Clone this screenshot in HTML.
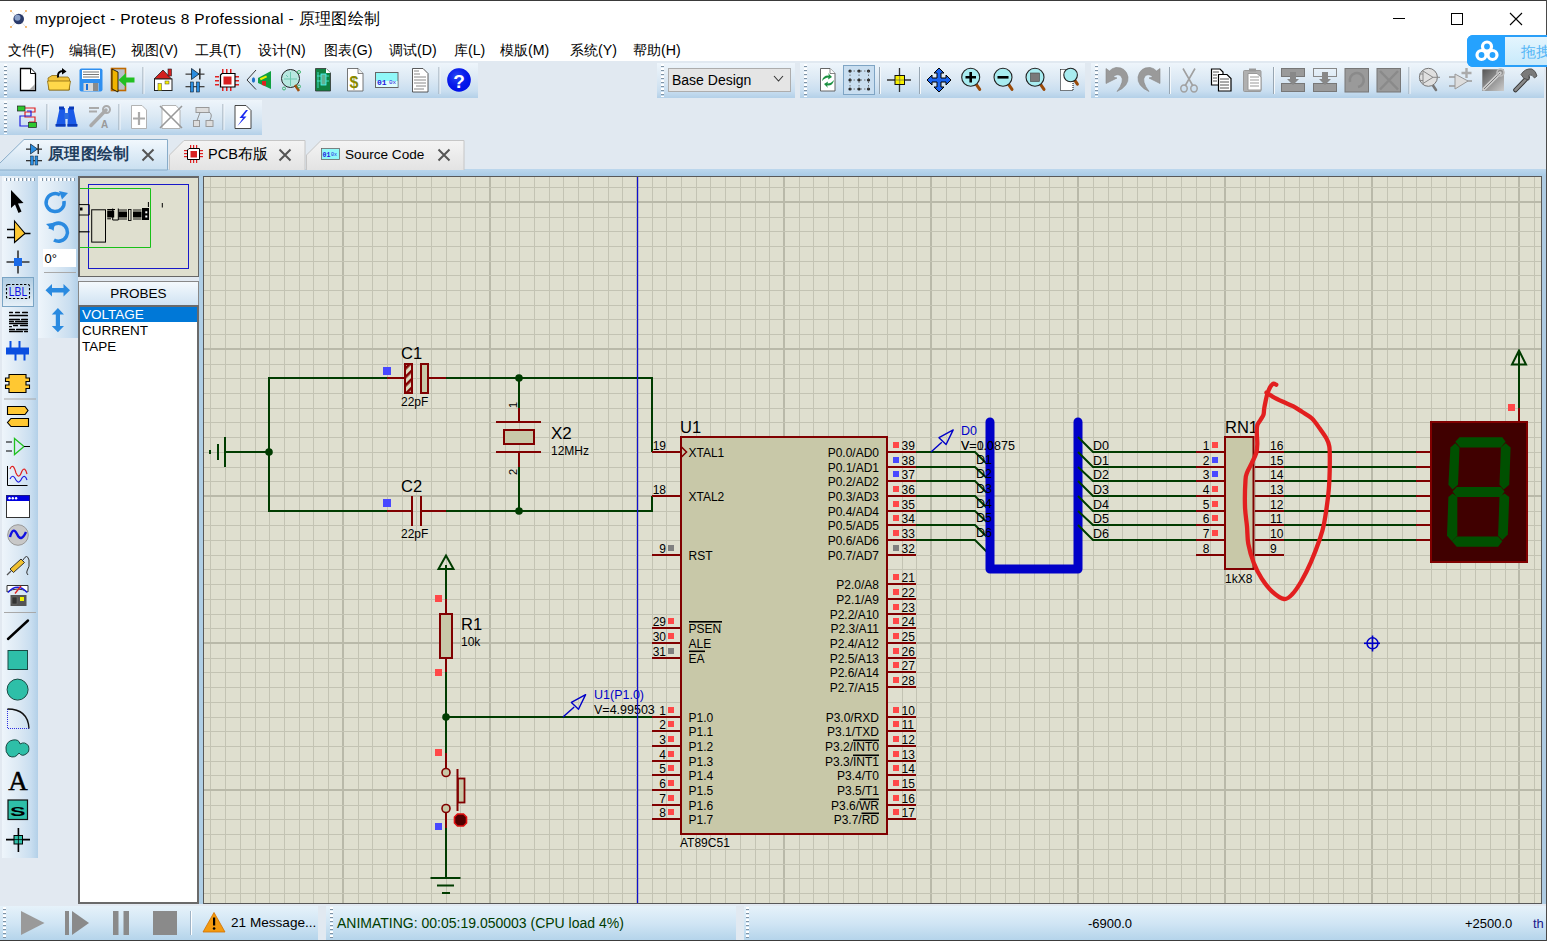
<!DOCTYPE html>
<html><head><meta charset="utf-8">
<style>
*{box-sizing:border-box}
body{margin:0;width:1547px;height:941px;position:relative;overflow:hidden;background:#fff;font-family:"Liberation Sans",sans-serif}
.a{position:absolute}
.t{white-space:nowrap;line-height:1}
</style></head><body>
<div class="a" style="left:0px;top:0px;width:1547px;height:38px;background:#fff"></div>
<div class="a" style="left:0px;top:0px;width:1547px;height:1px;background:#3a3a3a"></div>
<div class="a t" style="left:35px;top:11px;font-size:15.5px;letter-spacing:0.35px;color:#000">myproject - Proteus 8 Professional - 原理图绘制</div>
<div class="a" style="left:1393px;top:18px;width:12px;height:1px;background:#000"></div>
<div class="a" style="left:1451px;top:13px;width:12px;height:12px;border:1px solid #000"></div>
<svg class="a" style="left:1509px;top:12px" width="14" height="14"><path d="M1,1 L13,13 M13,1 L1,13" stroke="#000" stroke-width="1.1"/></svg>
<div class="a t" style="left:8px;top:43px;font-size:14.2px;color:#000">文件(F)</div>
<div class="a t" style="left:69px;top:43px;font-size:14.2px;color:#000">编辑(E)</div>
<div class="a t" style="left:131px;top:43px;font-size:14.2px;color:#000">视图(V)</div>
<div class="a t" style="left:195px;top:43px;font-size:14.2px;color:#000">工具(T)</div>
<div class="a t" style="left:258px;top:43px;font-size:14.2px;color:#000">设计(N)</div>
<div class="a t" style="left:324px;top:43px;font-size:14.2px;color:#000">图表(G)</div>
<div class="a t" style="left:389px;top:43px;font-size:14.2px;color:#000">调试(D)</div>
<div class="a t" style="left:454px;top:43px;font-size:14.2px;color:#000">库(L)</div>
<div class="a t" style="left:500px;top:43px;font-size:14.2px;color:#000">模版(M)</div>
<div class="a t" style="left:570px;top:43px;font-size:14.2px;color:#000">系统(Y)</div>
<div class="a t" style="left:633px;top:43px;font-size:14.2px;color:#000">帮助(H)</div>
<div class="a" style="left:0px;top:61px;width:1547px;height:74px;background:#e1e9f1"></div>
<div class="a" style="left:0px;top:63px;width:478px;height:35px;background:linear-gradient(#eef5fb 0%,#dce9f4 45%,#c9def0 80%,#b3d0e8 100%)"></div>
<div class="a" style="left:4px;top:64px;width:3px;height:33px;background:repeating-linear-gradient(#ffffff 0 2px,#7f93a6 2px 3px,transparent 3px 4px)"></div>
<div class="a" style="left:657px;top:63px;width:138px;height:35px;background:linear-gradient(#eef5fb 0%,#dce9f4 45%,#c9def0 80%,#b3d0e8 100%)"></div>
<div class="a" style="left:661px;top:64px;width:3px;height:33px;background:repeating-linear-gradient(#ffffff 0 2px,#7f93a6 2px 3px,transparent 3px 4px)"></div>
<div class="a" style="left:800px;top:63px;width:285px;height:35px;background:linear-gradient(#eef5fb 0%,#dce9f4 45%,#c9def0 80%,#b3d0e8 100%)"></div>
<div class="a" style="left:804px;top:64px;width:3px;height:33px;background:repeating-linear-gradient(#ffffff 0 2px,#7f93a6 2px 3px,transparent 3px 4px)"></div>
<div class="a" style="left:1091px;top:63px;width:453px;height:35px;background:linear-gradient(#eef5fb 0%,#dce9f4 45%,#c9def0 80%,#b3d0e8 100%)"></div>
<div class="a" style="left:1095px;top:64px;width:3px;height:33px;background:repeating-linear-gradient(#ffffff 0 2px,#7f93a6 2px 3px,transparent 3px 4px)"></div>
<div class="a" style="left:0px;top:100px;width:262px;height:35px;background:linear-gradient(#eef5fb 0%,#dce9f4 45%,#c9def0 80%,#b3d0e8 100%)"></div>
<div class="a" style="left:4px;top:101px;width:3px;height:33px;background:repeating-linear-gradient(#ffffff 0 2px,#7f93a6 2px 3px,transparent 3px 4px)"></div>
<div class="a" style="left:668px;top:68px;width:123px;height:24px;background:#e5e5e5;border:1px solid #adadad"></div>
<div class="a t" style="left:672px;top:73px;font-size:14px;color:#000">Base Design</div>
<svg class="a" style="left:773px;top:75px" width="11" height="8"><path d="M1,1 L5.5,6 L10,1" fill="none" stroke="#333" stroke-width="1.1"/></svg>
<div class="a" style="left:0px;top:135px;width:1547px;height:41px;background:#e1e9f1"></div>
<div class="a" style="left:0px;top:169px;width:1547px;height:7px;background:linear-gradient(#bcd7ed,#a9cbe6)"></div>
<svg class="a" style="left:0;top:139px" width="172" height="32"><defs><linearGradient id="tg1" x1="0" y1="0" x2="0" y2="1"><stop offset="0" stop-color="#f2f8fd"/><stop offset="1" stop-color="#c9dff0"/></linearGradient></defs><path d="M-1,25 L24,0.5 L167.5,0.5 L167.5,31 L-1,31 Z" fill="url(#tg1)" stroke="#88acc9" stroke-width="1"/></svg>
<svg class="a" style="left:168px;top:139px" width="300" height="32"><defs><linearGradient id="tg2" x1="0" y1="0" x2="0" y2="1"><stop offset="0" stop-color="#f4f4f4"/><stop offset="1" stop-color="#e3e3e3"/></linearGradient></defs><path d="M1.5,31 L1.5,16 L16,1.5 L137,1.5 L137,31" fill="url(#tg2)" stroke="#c6c6c6"/><path d="M138.5,31 L138.5,16 L153,1.5 L296,1.5 L296,31" fill="url(#tg2)" stroke="#c6c6c6"/></svg>
<div class="a t" style="left:48px;top:146px;font-size:15.5px;color:#1d3c5c;font-weight:bold;letter-spacing:0.3px">原理图绘制</div>
<div class="a t" style="left:208px;top:147px;font-size:14.5px;color:#000">PCB布版</div>
<div class="a t" style="left:345px;top:148px;font-size:13.6px;color:#000">Source Code</div>
<svg class="a" style="left:141px;top:148px" width="14" height="14"><path d="M1.5,1.5 L12.5,12.5 M12.5,1.5 L1.5,12.5" stroke="#555" stroke-width="2"/></svg>
<svg class="a" style="left:278px;top:148px" width="14" height="14"><path d="M1.5,1.5 L12.5,12.5 M12.5,1.5 L1.5,12.5" stroke="#555" stroke-width="2"/></svg>
<svg class="a" style="left:437px;top:148px" width="14" height="14"><path d="M1.5,1.5 L12.5,12.5 M12.5,1.5 L1.5,12.5" stroke="#555" stroke-width="2"/></svg>
<div class="a" style="left:0px;top:176px;width:203px;height:728px;background:#e2e9f1"></div>
<div class="a" style="left:2px;top:176px;width:36px;height:682px;background:linear-gradient(90deg,#eef5fb 0%,#dce9f4 45%,#c9def0 80%,#b3d0e8 100%)"></div>
<div class="a" style="left:4px;top:178px;width:32px;height:3px;background:repeating-linear-gradient(90deg,#ffffff 0 2px,#7f93a6 2px 3px,transparent 3px 4px)"></div>
<div class="a" style="left:38px;top:176px;width:40px;height:162px;background:linear-gradient(90deg,#eef5fb 0%,#dce9f4 45%,#c9def0 80%,#b3d0e8 100%)"></div>
<div class="a" style="left:40px;top:178px;width:36px;height:3px;background:repeating-linear-gradient(90deg,#ffffff 0 2px,#7f93a6 2px 3px,transparent 3px 4px)"></div>
<div class="a" style="left:78px;top:176px;width:121px;height:101px;background:#dfdfcf;border:2px solid #666;border-right-width:1px;border-bottom-width:1px"></div>
<div class="a" style="left:78px;top:281px;width:121px;height:25px;background:linear-gradient(#f4f9fd,#cfe2f2);border:1px solid #888;border-bottom:none"></div>
<div class="a t" style="left:78px;top:287px;width:121px;text-align:center;font-size:13.5px;color:#000">PROBES</div>
<div class="a" style="left:78px;top:305px;width:121px;height:599px;background:#fff;border:2px solid #6a6a6a"></div>
<div class="a" style="left:80px;top:307px;width:117px;height:15px;background:#0078d7"></div>
<div class="a t" style="left:82px;top:307px;font-size:13.5px;color:#fff;line-height:15px">VOLTAGE</div>
<div class="a t" style="left:82px;top:323px;font-size:13.5px;color:#000;line-height:15px">CURRENT</div>
<div class="a t" style="left:82px;top:339px;font-size:13.5px;color:#000;line-height:15px">TAPE</div>
<div class="a" style="left:199px;top:176px;width:4px;height:728px;background:#b0cfe6"></div>
<div class="a" style="left:1542px;top:176px;width:5px;height:728px;background:#aecbe2;border-right:1px solid #5a5a5a"></div>
<div class="a" style="left:0px;top:904px;width:1547px;height:2px;background:#e2e9f1"></div>
<div class="a" style="left:0px;top:906px;width:1547px;height:35px;background:linear-gradient(#e6f2fa,#d0e5f4 50%,#b3d3ea)"></div>
<div class="a" style="left:0px;top:940px;width:1547px;height:1px;background:#3c3c3c"></div>
<div class="a" style="left:3px;top:907px;width:3px;height:32px;background:repeating-linear-gradient(#ffffff 0 2px,#7f93a6 2px 3px,transparent 3px 4px)"></div>
<div class="a" style="left:190px;top:911px;width:1px;height:24px;background:#9fb3c6;box-shadow:1px 0 0 #fff"></div>
<div class="a" style="left:318px;top:906px;width:8px;height:34px;background:#e1e9f1"></div>
<div class="a" style="left:330px;top:907px;width:3px;height:32px;background:repeating-linear-gradient(#ffffff 0 2px,#7f93a6 2px 3px,transparent 3px 4px)"></div>
<div class="a t" style="left:231px;top:916px;font-size:13.6px;color:#000">21 Message...</div>
<div class="a t" style="left:337px;top:916px;font-size:14px;color:#003c00">ANIMATING: 00:05:19.050003 (CPU load 4%)</div>
<div class="a" style="left:736px;top:906px;width:8px;height:34px;background:#e1e9f1"></div>
<div class="a" style="left:746px;top:907px;width:3px;height:32px;background:repeating-linear-gradient(#ffffff 0 2px,#7f93a6 2px 3px,transparent 3px 4px)"></div>
<div class="a t" style="left:1088px;top:917px;font-size:13px;color:#000">-6900.0</div>
<div class="a t" style="left:1465px;top:917px;font-size:13px;color:#000">+2500.0</div>
<div class="a t" style="left:1533px;top:917px;font-size:13px;color:#1a1a8c">th</div>
<div class="a" style="left:1546px;top:0px;width:1px;height:941px;background:#4a4a4a"></div>
<div class="a" style="left:1467px;top:35px;width:90px;height:32px;border-radius:6px;background:linear-gradient(#e4f5fe,#c8eafb);border:2px solid #2a9ff8"></div>
<div class="a" style="left:1467px;top:35px;width:38px;height:32px;border-radius:6px 0 0 6px;background:#25a2fe"></div>
<div class="a t" style="left:1521px;top:44px;font-size:15px;color:#55b6f6">拖拽</div>
<svg class="a" style="left:1474px;top:39px" width="26" height="24"><g fill="none" stroke="#fff" stroke-width="3.2"><circle cx="13" cy="7.5" r="4.5"/><circle cx="7.5" cy="16" r="4.5"/><circle cx="18.5" cy="16" r="4.5"/></g></svg>
<div class="a" style="left:203px;top:176px;width:1339px;height:728px;background:#dfdfcf;border:1px solid #585858"></div>
<svg class="a" style="left:0;top:0" width="1547" height="941" viewBox="0 0 1547 941" font-family="Liberation Sans, sans-serif">
<rect x="210" y="177" width="1" height="726" fill="#c3c3b3"/>
<rect x="225" y="177" width="1" height="726" fill="#c3c3b3"/>
<rect x="240" y="177" width="1" height="726" fill="#c3c3b3"/>
<rect x="255" y="177" width="1" height="726" fill="#c3c3b3"/>
<rect x="269" y="177" width="1" height="726" fill="#c3c3b3"/>
<rect x="284" y="177" width="1" height="726" fill="#c3c3b3"/>
<rect x="299" y="177" width="1" height="726" fill="#c3c3b3"/>
<rect x="313" y="177" width="1" height="726" fill="#c3c3b3"/>
<rect x="328" y="177" width="1" height="726" fill="#c3c3b3"/>
<rect x="342" y="177" width="2" height="726" fill="#b9b9a9"/>
<rect x="358" y="177" width="1" height="726" fill="#c3c3b3"/>
<rect x="372" y="177" width="1" height="726" fill="#c3c3b3"/>
<rect x="387" y="177" width="1" height="726" fill="#c3c3b3"/>
<rect x="402" y="177" width="1" height="726" fill="#c3c3b3"/>
<rect x="416" y="177" width="1" height="726" fill="#c3c3b3"/>
<rect x="431" y="177" width="1" height="726" fill="#c3c3b3"/>
<rect x="446" y="177" width="1" height="726" fill="#c3c3b3"/>
<rect x="460" y="177" width="1" height="726" fill="#c3c3b3"/>
<rect x="475" y="177" width="1" height="726" fill="#c3c3b3"/>
<rect x="489" y="177" width="2" height="726" fill="#b9b9a9"/>
<rect x="505" y="177" width="1" height="726" fill="#c3c3b3"/>
<rect x="519" y="177" width="1" height="726" fill="#c3c3b3"/>
<rect x="534" y="177" width="1" height="726" fill="#c3c3b3"/>
<rect x="549" y="177" width="1" height="726" fill="#c3c3b3"/>
<rect x="563" y="177" width="1" height="726" fill="#c3c3b3"/>
<rect x="578" y="177" width="1" height="726" fill="#c3c3b3"/>
<rect x="593" y="177" width="1" height="726" fill="#c3c3b3"/>
<rect x="608" y="177" width="1" height="726" fill="#c3c3b3"/>
<rect x="622" y="177" width="1" height="726" fill="#c3c3b3"/>
<rect x="636" y="177" width="2" height="726" fill="#b9b9a9"/>
<rect x="652" y="177" width="1" height="726" fill="#c3c3b3"/>
<rect x="666" y="177" width="1" height="726" fill="#c3c3b3"/>
<rect x="681" y="177" width="1" height="726" fill="#c3c3b3"/>
<rect x="696" y="177" width="1" height="726" fill="#c3c3b3"/>
<rect x="710" y="177" width="1" height="726" fill="#c3c3b3"/>
<rect x="725" y="177" width="1" height="726" fill="#c3c3b3"/>
<rect x="740" y="177" width="1" height="726" fill="#c3c3b3"/>
<rect x="755" y="177" width="1" height="726" fill="#c3c3b3"/>
<rect x="769" y="177" width="1" height="726" fill="#c3c3b3"/>
<rect x="783" y="177" width="2" height="726" fill="#b9b9a9"/>
<rect x="799" y="177" width="1" height="726" fill="#c3c3b3"/>
<rect x="813" y="177" width="1" height="726" fill="#c3c3b3"/>
<rect x="828" y="177" width="1" height="726" fill="#c3c3b3"/>
<rect x="843" y="177" width="1" height="726" fill="#c3c3b3"/>
<rect x="858" y="177" width="1" height="726" fill="#c3c3b3"/>
<rect x="872" y="177" width="1" height="726" fill="#c3c3b3"/>
<rect x="887" y="177" width="1" height="726" fill="#c3c3b3"/>
<rect x="902" y="177" width="1" height="726" fill="#c3c3b3"/>
<rect x="916" y="177" width="1" height="726" fill="#c3c3b3"/>
<rect x="930" y="177" width="2" height="726" fill="#b9b9a9"/>
<rect x="946" y="177" width="1" height="726" fill="#c3c3b3"/>
<rect x="960" y="177" width="1" height="726" fill="#c3c3b3"/>
<rect x="975" y="177" width="1" height="726" fill="#c3c3b3"/>
<rect x="990" y="177" width="1" height="726" fill="#c3c3b3"/>
<rect x="1005" y="177" width="1" height="726" fill="#c3c3b3"/>
<rect x="1019" y="177" width="1" height="726" fill="#c3c3b3"/>
<rect x="1034" y="177" width="1" height="726" fill="#c3c3b3"/>
<rect x="1049" y="177" width="1" height="726" fill="#c3c3b3"/>
<rect x="1063" y="177" width="1" height="726" fill="#c3c3b3"/>
<rect x="1077" y="177" width="2" height="726" fill="#b9b9a9"/>
<rect x="1093" y="177" width="1" height="726" fill="#c3c3b3"/>
<rect x="1108" y="177" width="1" height="726" fill="#c3c3b3"/>
<rect x="1122" y="177" width="1" height="726" fill="#c3c3b3"/>
<rect x="1137" y="177" width="1" height="726" fill="#c3c3b3"/>
<rect x="1152" y="177" width="1" height="726" fill="#c3c3b3"/>
<rect x="1166" y="177" width="1" height="726" fill="#c3c3b3"/>
<rect x="1181" y="177" width="1" height="726" fill="#c3c3b3"/>
<rect x="1196" y="177" width="1" height="726" fill="#c3c3b3"/>
<rect x="1210" y="177" width="1" height="726" fill="#c3c3b3"/>
<rect x="1224" y="177" width="2" height="726" fill="#b9b9a9"/>
<rect x="1240" y="177" width="1" height="726" fill="#c3c3b3"/>
<rect x="1255" y="177" width="1" height="726" fill="#c3c3b3"/>
<rect x="1269" y="177" width="1" height="726" fill="#c3c3b3"/>
<rect x="1284" y="177" width="1" height="726" fill="#c3c3b3"/>
<rect x="1299" y="177" width="1" height="726" fill="#c3c3b3"/>
<rect x="1313" y="177" width="1" height="726" fill="#c3c3b3"/>
<rect x="1328" y="177" width="1" height="726" fill="#c3c3b3"/>
<rect x="1343" y="177" width="1" height="726" fill="#c3c3b3"/>
<rect x="1358" y="177" width="1" height="726" fill="#c3c3b3"/>
<rect x="1371" y="177" width="2" height="726" fill="#b9b9a9"/>
<rect x="1387" y="177" width="1" height="726" fill="#c3c3b3"/>
<rect x="1402" y="177" width="1" height="726" fill="#c3c3b3"/>
<rect x="1416" y="177" width="1" height="726" fill="#c3c3b3"/>
<rect x="1431" y="177" width="1" height="726" fill="#c3c3b3"/>
<rect x="1446" y="177" width="1" height="726" fill="#c3c3b3"/>
<rect x="1460" y="177" width="1" height="726" fill="#c3c3b3"/>
<rect x="1475" y="177" width="1" height="726" fill="#c3c3b3"/>
<rect x="1490" y="177" width="1" height="726" fill="#c3c3b3"/>
<rect x="1505" y="177" width="1" height="726" fill="#c3c3b3"/>
<rect x="1518" y="177" width="2" height="726" fill="#b9b9a9"/>
<rect x="1534" y="177" width="1" height="726" fill="#c3c3b3"/>
<rect x="204" y="187" width="1337" height="1" fill="#c3c3b3"/>
<rect x="204" y="201" width="1337" height="2" fill="#b9b9a9"/>
<rect x="204" y="217" width="1337" height="1" fill="#c3c3b3"/>
<rect x="204" y="231" width="1337" height="1" fill="#c3c3b3"/>
<rect x="204" y="246" width="1337" height="1" fill="#c3c3b3"/>
<rect x="204" y="261" width="1337" height="1" fill="#c3c3b3"/>
<rect x="204" y="275" width="1337" height="1" fill="#c3c3b3"/>
<rect x="204" y="290" width="1337" height="1" fill="#c3c3b3"/>
<rect x="204" y="305" width="1337" height="1" fill="#c3c3b3"/>
<rect x="204" y="319" width="1337" height="1" fill="#c3c3b3"/>
<rect x="204" y="334" width="1337" height="1" fill="#c3c3b3"/>
<rect x="204" y="348" width="1337" height="2" fill="#b9b9a9"/>
<rect x="204" y="364" width="1337" height="1" fill="#c3c3b3"/>
<rect x="204" y="378" width="1337" height="1" fill="#c3c3b3"/>
<rect x="204" y="393" width="1337" height="1" fill="#c3c3b3"/>
<rect x="204" y="408" width="1337" height="1" fill="#c3c3b3"/>
<rect x="204" y="422" width="1337" height="1" fill="#c3c3b3"/>
<rect x="204" y="437" width="1337" height="1" fill="#c3c3b3"/>
<rect x="204" y="452" width="1337" height="1" fill="#c3c3b3"/>
<rect x="204" y="467" width="1337" height="1" fill="#c3c3b3"/>
<rect x="204" y="481" width="1337" height="1" fill="#c3c3b3"/>
<rect x="204" y="495" width="1337" height="2" fill="#b9b9a9"/>
<rect x="204" y="511" width="1337" height="1" fill="#c3c3b3"/>
<rect x="204" y="525" width="1337" height="1" fill="#c3c3b3"/>
<rect x="204" y="540" width="1337" height="1" fill="#c3c3b3"/>
<rect x="204" y="555" width="1337" height="1" fill="#c3c3b3"/>
<rect x="204" y="569" width="1337" height="1" fill="#c3c3b3"/>
<rect x="204" y="584" width="1337" height="1" fill="#c3c3b3"/>
<rect x="204" y="599" width="1337" height="1" fill="#c3c3b3"/>
<rect x="204" y="614" width="1337" height="1" fill="#c3c3b3"/>
<rect x="204" y="628" width="1337" height="1" fill="#c3c3b3"/>
<rect x="204" y="642" width="1337" height="2" fill="#b9b9a9"/>
<rect x="204" y="658" width="1337" height="1" fill="#c3c3b3"/>
<rect x="204" y="672" width="1337" height="1" fill="#c3c3b3"/>
<rect x="204" y="687" width="1337" height="1" fill="#c3c3b3"/>
<rect x="204" y="702" width="1337" height="1" fill="#c3c3b3"/>
<rect x="204" y="717" width="1337" height="1" fill="#c3c3b3"/>
<rect x="204" y="731" width="1337" height="1" fill="#c3c3b3"/>
<rect x="204" y="746" width="1337" height="1" fill="#c3c3b3"/>
<rect x="204" y="761" width="1337" height="1" fill="#c3c3b3"/>
<rect x="204" y="775" width="1337" height="1" fill="#c3c3b3"/>
<rect x="204" y="789" width="1337" height="2" fill="#b9b9a9"/>
<rect x="204" y="805" width="1337" height="1" fill="#c3c3b3"/>
<rect x="204" y="819" width="1337" height="1" fill="#c3c3b3"/>
<rect x="204" y="834" width="1337" height="1" fill="#c3c3b3"/>
<rect x="204" y="849" width="1337" height="1" fill="#c3c3b3"/>
<rect x="204" y="864" width="1337" height="1" fill="#c3c3b3"/>
<rect x="204" y="878" width="1337" height="1" fill="#c3c3b3"/>
<rect x="204" y="893" width="1337" height="1" fill="#c3c3b3"/>
<rect x="224" y="437" width="2" height="30" fill="#003c00"/>
<rect x="217" y="444" width="2" height="16" fill="#003c00"/>
<rect x="209" y="450" width="2" height="4" fill="#003c00"/>
<line x1="225" y1="452" x2="269" y2="452" stroke="#003c00" stroke-width="2"/>
<polyline points="387,378 269,378 269,511 387,511" fill="none" stroke="#003c00" stroke-width="2" stroke-linejoin="miter"/>
<circle cx="269" cy="452" r="3.8" fill="#003c00"/>
<line x1="387" y1="378" x2="405" y2="378" stroke="#800000" stroke-width="2"/>
<line x1="428" y1="378" x2="446" y2="378" stroke="#800000" stroke-width="2"/>
<defs><pattern id="hatch" width="6" height="6" patternUnits="userSpaceOnUse" patternTransform="rotate(45)"><rect width="6" height="6" fill="#dcdcc0"/><rect width="2.6" height="6" fill="#800000"/></pattern></defs>
<rect x="405" y="364" width="7" height="29" fill="url(#hatch)" stroke="#800000" stroke-width="2"/>
<rect x="421" y="364" width="7" height="29" fill="#c8c8a8" stroke="#800000" stroke-width="2"/>
<rect x="383" y="367" width="8" height="8" fill="#4848ff"/>
<text x="401" y="359" font-size="16.5" fill="#000" text-anchor="start" >C1</text>
<text x="401" y="406" font-size="12" fill="#000" text-anchor="start" >22pF</text>
<line x1="387" y1="511" x2="412" y2="511" stroke="#800000" stroke-width="2"/>
<line x1="421" y1="511" x2="446" y2="511" stroke="#800000" stroke-width="2"/>
<rect x="411" y="496" width="2" height="30" fill="#800000"/>
<rect x="420" y="496" width="2" height="30" fill="#800000"/>
<rect x="383" y="499" width="8" height="8" fill="#4848ff"/>
<text x="401" y="492" font-size="16.5" fill="#000" text-anchor="start" >C2</text>
<text x="401" y="538" font-size="12" fill="#000" text-anchor="start" >22pF</text>
<polyline points="446,378 652,378 652,452" fill="none" stroke="#003c00" stroke-width="2" stroke-linejoin="miter"/>
<polyline points="446,511 652,511 652,496" fill="none" stroke="#003c00" stroke-width="2" stroke-linejoin="miter"/>
<circle cx="519" cy="378" r="3.8" fill="#003c00"/>
<circle cx="519" cy="511" r="3.8" fill="#003c00"/>
<line x1="519" y1="378" x2="519" y2="408" stroke="#003c00" stroke-width="2"/>
<line x1="519" y1="408" x2="519" y2="422" stroke="#800000" stroke-width="2"/>
<line x1="496" y1="422" x2="541" y2="422" stroke="#800000" stroke-width="2"/>
<rect x="504" y="430" width="30" height="14" fill="#c8c8a8" stroke="#800000" stroke-width="2"/>
<line x1="496" y1="452" x2="541" y2="452" stroke="#800000" stroke-width="2"/>
<line x1="519" y1="452" x2="519" y2="467" stroke="#800000" stroke-width="2"/>
<line x1="519" y1="467" x2="519" y2="511" stroke="#003c00" stroke-width="2"/>
<text x="551" y="439" font-size="17" fill="#000" text-anchor="start" >X2</text>
<text x="551" y="455" font-size="12" fill="#000" text-anchor="start" >12MHz</text>
<text x="517" y="408" font-size="11" transform="rotate(-90 517 408)" text-anchor="start">1</text>
<text x="517" y="475" font-size="11" transform="rotate(-90 517 475)" text-anchor="start">2</text>
<rect x="681" y="437" width="206" height="397" fill="#c8c8a8" stroke="#800000" stroke-width="2"/>
<text x="680" y="433" font-size="16.5" fill="#000" text-anchor="start" >U1</text>
<text x="680" y="847" font-size="12" fill="#000" text-anchor="start" >AT89C51</text>
<line x1="652" y1="452" x2="681" y2="452" stroke="#800000" stroke-width="2"/>
<text x="666" y="450" font-size="12" fill="#000" text-anchor="end" >19</text>
<text x="688.5" y="456.8" font-size="12" fill="#000" text-anchor="start" >XTAL1</text>
<line x1="652" y1="496" x2="681" y2="496" stroke="#800000" stroke-width="2"/>
<text x="666" y="494" font-size="12" fill="#000" text-anchor="end" >18</text>
<text x="688.5" y="500.8" font-size="12" fill="#000" text-anchor="start" >XTAL2</text>
<line x1="652" y1="555" x2="681" y2="555" stroke="#800000" stroke-width="2"/>
<text x="666" y="553" font-size="12" fill="#000" text-anchor="end" >9</text>
<rect x="668" y="545" width="6" height="6" fill="#808080"/>
<text x="688.5" y="559.8" font-size="12" fill="#000" text-anchor="start" >RST</text>
<line x1="652" y1="628" x2="681" y2="628" stroke="#800000" stroke-width="2"/>
<text x="666" y="626" font-size="12" fill="#000" text-anchor="end" >29</text>
<rect x="668" y="618" width="6" height="6" fill="#ff4848"/>
<text x="688.5" y="632.8" font-size="12" fill="#000" text-anchor="start" >PSEN</text>
<line x1="652" y1="643" x2="681" y2="643" stroke="#800000" stroke-width="2"/>
<text x="666" y="641" font-size="12" fill="#000" text-anchor="end" >30</text>
<rect x="668" y="633" width="6" height="6" fill="#ff4848"/>
<text x="688.5" y="647.8" font-size="12" fill="#000" text-anchor="start" >ALE</text>
<line x1="652" y1="658" x2="681" y2="658" stroke="#800000" stroke-width="2"/>
<text x="666" y="656" font-size="12" fill="#000" text-anchor="end" >31</text>
<rect x="668" y="648" width="6" height="6" fill="#808080"/>
<text x="688.5" y="662.8" font-size="12" fill="#000" text-anchor="start" >EA</text>
<line x1="652" y1="717" x2="681" y2="717" stroke="#800000" stroke-width="2"/>
<text x="666" y="715" font-size="12" fill="#000" text-anchor="end" >1</text>
<rect x="668" y="707" width="6" height="6" fill="#ff4848"/>
<text x="688.5" y="721.8" font-size="12" fill="#000" text-anchor="start" >P1.0</text>
<line x1="652" y1="731" x2="681" y2="731" stroke="#800000" stroke-width="2"/>
<text x="666" y="729" font-size="12" fill="#000" text-anchor="end" >2</text>
<rect x="668" y="721" width="6" height="6" fill="#ff4848"/>
<text x="688.5" y="735.8" font-size="12" fill="#000" text-anchor="start" >P1.1</text>
<line x1="652" y1="746" x2="681" y2="746" stroke="#800000" stroke-width="2"/>
<text x="666" y="744" font-size="12" fill="#000" text-anchor="end" >3</text>
<rect x="668" y="736" width="6" height="6" fill="#ff4848"/>
<text x="688.5" y="750.8" font-size="12" fill="#000" text-anchor="start" >P1.2</text>
<line x1="652" y1="761" x2="681" y2="761" stroke="#800000" stroke-width="2"/>
<text x="666" y="759" font-size="12" fill="#000" text-anchor="end" >4</text>
<rect x="668" y="751" width="6" height="6" fill="#ff4848"/>
<text x="688.5" y="765.8" font-size="12" fill="#000" text-anchor="start" >P1.3</text>
<line x1="652" y1="775" x2="681" y2="775" stroke="#800000" stroke-width="2"/>
<text x="666" y="773" font-size="12" fill="#000" text-anchor="end" >5</text>
<rect x="668" y="765" width="6" height="6" fill="#ff4848"/>
<text x="688.5" y="779.8" font-size="12" fill="#000" text-anchor="start" >P1.4</text>
<line x1="652" y1="790" x2="681" y2="790" stroke="#800000" stroke-width="2"/>
<text x="666" y="788" font-size="12" fill="#000" text-anchor="end" >6</text>
<rect x="668" y="780" width="6" height="6" fill="#ff4848"/>
<text x="688.5" y="794.8" font-size="12" fill="#000" text-anchor="start" >P1.5</text>
<line x1="652" y1="805" x2="681" y2="805" stroke="#800000" stroke-width="2"/>
<text x="666" y="803" font-size="12" fill="#000" text-anchor="end" >7</text>
<rect x="668" y="795" width="6" height="6" fill="#ff4848"/>
<text x="688.5" y="809.8" font-size="12" fill="#000" text-anchor="start" >P1.6</text>
<line x1="652" y1="819" x2="681" y2="819" stroke="#800000" stroke-width="2"/>
<text x="666" y="817" font-size="12" fill="#000" text-anchor="end" >8</text>
<rect x="668" y="809" width="6" height="6" fill="#ff4848"/>
<text x="688.5" y="823.8" font-size="12" fill="#000" text-anchor="start" >P1.7</text>
<rect x="689" y="621" width="33" height="1.6" fill="#000"/>
<rect x="689" y="650.5" width="16" height="1.6" fill="#000"/>
<polyline points="681,446.5 686.5,452 681,457.5" fill="none" stroke="#800000" stroke-width="1.6"/>
<line x1="887" y1="452" x2="916" y2="452" stroke="#800000" stroke-width="2"/>
<text x="901.5" y="449.5" font-size="12" fill="#000" text-anchor="start" >39</text>
<rect x="893" y="442" width="6" height="6" fill="#ff4848"/>
<text x="879" y="456.8" font-size="12" fill="#000" text-anchor="end" >P0.0/AD0</text>
<line x1="887" y1="467" x2="916" y2="467" stroke="#800000" stroke-width="2"/>
<text x="901.5" y="464.5" font-size="12" fill="#000" text-anchor="start" >38</text>
<rect x="893" y="457" width="6" height="6" fill="#4848ff"/>
<text x="879" y="471.8" font-size="12" fill="#000" text-anchor="end" >P0.1/AD1</text>
<line x1="887" y1="481" x2="916" y2="481" stroke="#800000" stroke-width="2"/>
<text x="901.5" y="478.5" font-size="12" fill="#000" text-anchor="start" >37</text>
<rect x="893" y="471" width="6" height="6" fill="#4848ff"/>
<text x="879" y="485.8" font-size="12" fill="#000" text-anchor="end" >P0.2/AD2</text>
<line x1="887" y1="496" x2="916" y2="496" stroke="#800000" stroke-width="2"/>
<text x="901.5" y="493.5" font-size="12" fill="#000" text-anchor="start" >36</text>
<rect x="893" y="486" width="6" height="6" fill="#ff4848"/>
<text x="879" y="500.8" font-size="12" fill="#000" text-anchor="end" >P0.3/AD3</text>
<line x1="887" y1="511" x2="916" y2="511" stroke="#800000" stroke-width="2"/>
<text x="901.5" y="508.5" font-size="12" fill="#000" text-anchor="start" >35</text>
<rect x="893" y="501" width="6" height="6" fill="#ff4848"/>
<text x="879" y="515.8" font-size="12" fill="#000" text-anchor="end" >P0.4/AD4</text>
<line x1="887" y1="525" x2="916" y2="525" stroke="#800000" stroke-width="2"/>
<text x="901.5" y="522.5" font-size="12" fill="#000" text-anchor="start" >34</text>
<rect x="893" y="515" width="6" height="6" fill="#ff4848"/>
<text x="879" y="529.8" font-size="12" fill="#000" text-anchor="end" >P0.5/AD5</text>
<line x1="887" y1="540" x2="916" y2="540" stroke="#800000" stroke-width="2"/>
<text x="901.5" y="537.5" font-size="12" fill="#000" text-anchor="start" >33</text>
<rect x="893" y="530" width="6" height="6" fill="#ff4848"/>
<text x="879" y="544.8" font-size="12" fill="#000" text-anchor="end" >P0.6/AD6</text>
<line x1="887" y1="555" x2="916" y2="555" stroke="#800000" stroke-width="2"/>
<text x="901.5" y="552.5" font-size="12" fill="#000" text-anchor="start" >32</text>
<rect x="893" y="545" width="6" height="6" fill="#808080"/>
<text x="879" y="559.8" font-size="12" fill="#000" text-anchor="end" >P0.7/AD7</text>
<line x1="887" y1="584" x2="916" y2="584" stroke="#800000" stroke-width="2"/>
<text x="901.5" y="581.5" font-size="12" fill="#000" text-anchor="start" >21</text>
<rect x="893" y="574" width="6" height="6" fill="#ff4848"/>
<text x="879" y="588.8" font-size="12" fill="#000" text-anchor="end" >P2.0/A8</text>
<line x1="887" y1="599" x2="916" y2="599" stroke="#800000" stroke-width="2"/>
<text x="901.5" y="596.5" font-size="12" fill="#000" text-anchor="start" >22</text>
<rect x="893" y="589" width="6" height="6" fill="#ff4848"/>
<text x="879" y="603.8" font-size="12" fill="#000" text-anchor="end" >P2.1/A9</text>
<line x1="887" y1="614" x2="916" y2="614" stroke="#800000" stroke-width="2"/>
<text x="901.5" y="611.5" font-size="12" fill="#000" text-anchor="start" >23</text>
<rect x="893" y="604" width="6" height="6" fill="#ff4848"/>
<text x="879" y="618.8" font-size="12" fill="#000" text-anchor="end" >P2.2/A10</text>
<line x1="887" y1="628" x2="916" y2="628" stroke="#800000" stroke-width="2"/>
<text x="901.5" y="625.5" font-size="12" fill="#000" text-anchor="start" >24</text>
<rect x="893" y="618" width="6" height="6" fill="#ff4848"/>
<text x="879" y="632.8" font-size="12" fill="#000" text-anchor="end" >P2.3/A11</text>
<line x1="887" y1="643" x2="916" y2="643" stroke="#800000" stroke-width="2"/>
<text x="901.5" y="640.5" font-size="12" fill="#000" text-anchor="start" >25</text>
<rect x="893" y="633" width="6" height="6" fill="#ff4848"/>
<text x="879" y="647.8" font-size="12" fill="#000" text-anchor="end" >P2.4/A12</text>
<line x1="887" y1="658" x2="916" y2="658" stroke="#800000" stroke-width="2"/>
<text x="901.5" y="655.5" font-size="12" fill="#000" text-anchor="start" >26</text>
<rect x="893" y="648" width="6" height="6" fill="#ff4848"/>
<text x="879" y="662.8" font-size="12" fill="#000" text-anchor="end" >P2.5/A13</text>
<line x1="887" y1="672" x2="916" y2="672" stroke="#800000" stroke-width="2"/>
<text x="901.5" y="669.5" font-size="12" fill="#000" text-anchor="start" >27</text>
<rect x="893" y="662" width="6" height="6" fill="#ff4848"/>
<text x="879" y="676.8" font-size="12" fill="#000" text-anchor="end" >P2.6/A14</text>
<line x1="887" y1="687" x2="916" y2="687" stroke="#800000" stroke-width="2"/>
<text x="901.5" y="684.5" font-size="12" fill="#000" text-anchor="start" >28</text>
<rect x="893" y="677" width="6" height="6" fill="#ff4848"/>
<text x="879" y="691.8" font-size="12" fill="#000" text-anchor="end" >P2.7/A15</text>
<line x1="887" y1="717" x2="916" y2="717" stroke="#800000" stroke-width="2"/>
<text x="901.5" y="714.5" font-size="12" fill="#000" text-anchor="start" >10</text>
<rect x="893" y="707" width="6" height="6" fill="#ff4848"/>
<text x="879" y="721.8" font-size="12" fill="#000" text-anchor="end" >P3.0/RXD</text>
<line x1="887" y1="731" x2="916" y2="731" stroke="#800000" stroke-width="2"/>
<text x="901.5" y="728.5" font-size="12" fill="#000" text-anchor="start" >11</text>
<rect x="893" y="721" width="6" height="6" fill="#ff4848"/>
<text x="879" y="735.8" font-size="12" fill="#000" text-anchor="end" >P3.1/TXD</text>
<line x1="887" y1="746" x2="916" y2="746" stroke="#800000" stroke-width="2"/>
<text x="901.5" y="743.5" font-size="12" fill="#000" text-anchor="start" >12</text>
<rect x="893" y="736" width="6" height="6" fill="#ff4848"/>
<text x="879" y="750.8" font-size="12" fill="#000" text-anchor="end" >P3.2/INT0</text>
<line x1="887" y1="761" x2="916" y2="761" stroke="#800000" stroke-width="2"/>
<text x="901.5" y="758.5" font-size="12" fill="#000" text-anchor="start" >13</text>
<rect x="893" y="751" width="6" height="6" fill="#ff4848"/>
<text x="879" y="765.8" font-size="12" fill="#000" text-anchor="end" >P3.3/INT1</text>
<line x1="887" y1="775" x2="916" y2="775" stroke="#800000" stroke-width="2"/>
<text x="901.5" y="772.5" font-size="12" fill="#000" text-anchor="start" >14</text>
<rect x="893" y="765" width="6" height="6" fill="#ff4848"/>
<text x="879" y="779.8" font-size="12" fill="#000" text-anchor="end" >P3.4/T0</text>
<line x1="887" y1="790" x2="916" y2="790" stroke="#800000" stroke-width="2"/>
<text x="901.5" y="787.5" font-size="12" fill="#000" text-anchor="start" >15</text>
<rect x="893" y="780" width="6" height="6" fill="#ff4848"/>
<text x="879" y="794.8" font-size="12" fill="#000" text-anchor="end" >P3.5/T1</text>
<line x1="887" y1="805" x2="916" y2="805" stroke="#800000" stroke-width="2"/>
<text x="901.5" y="802.5" font-size="12" fill="#000" text-anchor="start" >16</text>
<rect x="893" y="795" width="6" height="6" fill="#ff4848"/>
<text x="879" y="809.8" font-size="12" fill="#000" text-anchor="end" >P3.6/WR</text>
<line x1="887" y1="819" x2="916" y2="819" stroke="#800000" stroke-width="2"/>
<text x="901.5" y="816.5" font-size="12" fill="#000" text-anchor="start" >17</text>
<rect x="893" y="809" width="6" height="6" fill="#ff4848"/>
<text x="879" y="823.8" font-size="12" fill="#000" text-anchor="end" >P3.7/RD</text>
<rect x="853" y="739.5" width="26" height="1.6" fill="#000"/>
<rect x="853" y="754.5" width="26" height="1.6" fill="#000"/>
<rect x="859.5" y="798.5" width="19.5" height="1.6" fill="#000"/>
<rect x="861.5" y="812.5" width="17.5" height="1.6" fill="#000"/>
<polyline points="916,452 975,452 990,467" fill="none" stroke="#003c00" stroke-width="2" stroke-linejoin="miter"/>
<polyline points="916,467 975,467 990,481" fill="none" stroke="#003c00" stroke-width="2" stroke-linejoin="miter"/>
<polyline points="916,481 975,481 990,496" fill="none" stroke="#003c00" stroke-width="2" stroke-linejoin="miter"/>
<polyline points="916,496 975,496 990,511" fill="none" stroke="#003c00" stroke-width="2" stroke-linejoin="miter"/>
<polyline points="916,511 975,511 990,525" fill="none" stroke="#003c00" stroke-width="2" stroke-linejoin="miter"/>
<polyline points="916,525 975,525 990,540" fill="none" stroke="#003c00" stroke-width="2" stroke-linejoin="miter"/>
<polyline points="916,540 975,540 990,555" fill="none" stroke="#003c00" stroke-width="2" stroke-linejoin="miter"/>
<polyline points="990,422 990,569 1078,569 1078,422" fill="none" stroke="#0000c8" stroke-width="9" stroke-linecap="round" stroke-linejoin="round"/>
<text x="976" y="464" font-size="12.5" fill="#000" text-anchor="start" >D1</text>
<text x="976" y="478" font-size="12.5" fill="#000" text-anchor="start" >D2</text>
<text x="976" y="493" font-size="12.5" fill="#000" text-anchor="start" >D3</text>
<text x="976" y="508" font-size="12.5" fill="#000" text-anchor="start" >D4</text>
<text x="976" y="522" font-size="12.5" fill="#000" text-anchor="start" >D5</text>
<text x="976" y="537" font-size="12.5" fill="#000" text-anchor="start" >D6</text>
<polyline points="1078,437 1093,452 1196,452" fill="none" stroke="#003c00" stroke-width="2" stroke-linejoin="miter"/>
<line x1="1196" y1="452" x2="1225" y2="452" stroke="#800000" stroke-width="2"/>
<text x="1093" y="450" font-size="12.5" fill="#000" text-anchor="start" >D0</text>
<polyline points="1284,452 1416,452" fill="none" stroke="#003c00" stroke-width="2" stroke-linejoin="miter"/>
<line x1="1416" y1="452" x2="1431" y2="452" stroke="#800000" stroke-width="2"/>
<polyline points="1078,452 1093,467 1196,467" fill="none" stroke="#003c00" stroke-width="2" stroke-linejoin="miter"/>
<line x1="1196" y1="467" x2="1225" y2="467" stroke="#800000" stroke-width="2"/>
<text x="1093" y="465" font-size="12.5" fill="#000" text-anchor="start" >D1</text>
<polyline points="1284,467 1416,467" fill="none" stroke="#003c00" stroke-width="2" stroke-linejoin="miter"/>
<line x1="1416" y1="467" x2="1431" y2="467" stroke="#800000" stroke-width="2"/>
<polyline points="1078,467 1093,481 1196,481" fill="none" stroke="#003c00" stroke-width="2" stroke-linejoin="miter"/>
<line x1="1196" y1="481" x2="1225" y2="481" stroke="#800000" stroke-width="2"/>
<text x="1093" y="479" font-size="12.5" fill="#000" text-anchor="start" >D2</text>
<polyline points="1284,481 1416,481" fill="none" stroke="#003c00" stroke-width="2" stroke-linejoin="miter"/>
<line x1="1416" y1="481" x2="1431" y2="481" stroke="#800000" stroke-width="2"/>
<polyline points="1078,481 1093,496 1196,496" fill="none" stroke="#003c00" stroke-width="2" stroke-linejoin="miter"/>
<line x1="1196" y1="496" x2="1225" y2="496" stroke="#800000" stroke-width="2"/>
<text x="1093" y="494" font-size="12.5" fill="#000" text-anchor="start" >D3</text>
<polyline points="1284,496 1416,496" fill="none" stroke="#003c00" stroke-width="2" stroke-linejoin="miter"/>
<line x1="1416" y1="496" x2="1431" y2="496" stroke="#800000" stroke-width="2"/>
<polyline points="1078,496 1093,511 1196,511" fill="none" stroke="#003c00" stroke-width="2" stroke-linejoin="miter"/>
<line x1="1196" y1="511" x2="1225" y2="511" stroke="#800000" stroke-width="2"/>
<text x="1093" y="509" font-size="12.5" fill="#000" text-anchor="start" >D4</text>
<polyline points="1284,511 1416,511" fill="none" stroke="#003c00" stroke-width="2" stroke-linejoin="miter"/>
<line x1="1416" y1="511" x2="1431" y2="511" stroke="#800000" stroke-width="2"/>
<polyline points="1078,511 1093,525 1196,525" fill="none" stroke="#003c00" stroke-width="2" stroke-linejoin="miter"/>
<line x1="1196" y1="525" x2="1225" y2="525" stroke="#800000" stroke-width="2"/>
<text x="1093" y="523" font-size="12.5" fill="#000" text-anchor="start" >D5</text>
<polyline points="1284,525 1416,525" fill="none" stroke="#003c00" stroke-width="2" stroke-linejoin="miter"/>
<line x1="1416" y1="525" x2="1431" y2="525" stroke="#800000" stroke-width="2"/>
<polyline points="1078,525 1093,540 1196,540" fill="none" stroke="#003c00" stroke-width="2" stroke-linejoin="miter"/>
<line x1="1196" y1="540" x2="1225" y2="540" stroke="#800000" stroke-width="2"/>
<text x="1093" y="538" font-size="12.5" fill="#000" text-anchor="start" >D6</text>
<polyline points="1284,540 1416,540" fill="none" stroke="#003c00" stroke-width="2" stroke-linejoin="miter"/>
<line x1="1416" y1="540" x2="1431" y2="540" stroke="#800000" stroke-width="2"/>
<rect x="1225" y="437" width="28.5" height="132" fill="#c8c8a8" stroke="#800000" stroke-width="2"/>
<text x="1225" y="432.5" font-size="16.5" fill="#000" text-anchor="start" >RN1</text>
<text x="1225" y="583" font-size="12" fill="#000" text-anchor="start" >1kX8</text>
<line x1="1196" y1="452" x2="1225" y2="452" stroke="#800000" stroke-width="2"/>
<line x1="1255" y1="452" x2="1284" y2="452" stroke="#800000" stroke-width="2"/>
<text x="1209.5" y="450" font-size="12" fill="#000" text-anchor="end" >1</text>
<rect x="1212" y="442" width="6" height="6" fill="#ff4848"/>
<text x="1270" y="450" font-size="12" fill="#000" text-anchor="start" >16</text>
<line x1="1196" y1="467" x2="1225" y2="467" stroke="#800000" stroke-width="2"/>
<line x1="1255" y1="467" x2="1284" y2="467" stroke="#800000" stroke-width="2"/>
<text x="1209.5" y="465" font-size="12" fill="#000" text-anchor="end" >2</text>
<rect x="1212" y="457" width="6" height="6" fill="#4848ff"/>
<text x="1270" y="465" font-size="12" fill="#000" text-anchor="start" >15</text>
<line x1="1196" y1="481" x2="1225" y2="481" stroke="#800000" stroke-width="2"/>
<line x1="1255" y1="481" x2="1284" y2="481" stroke="#800000" stroke-width="2"/>
<text x="1209.5" y="479" font-size="12" fill="#000" text-anchor="end" >3</text>
<rect x="1212" y="471" width="6" height="6" fill="#4848ff"/>
<text x="1270" y="479" font-size="12" fill="#000" text-anchor="start" >14</text>
<line x1="1196" y1="496" x2="1225" y2="496" stroke="#800000" stroke-width="2"/>
<line x1="1255" y1="496" x2="1284" y2="496" stroke="#800000" stroke-width="2"/>
<text x="1209.5" y="494" font-size="12" fill="#000" text-anchor="end" >4</text>
<rect x="1212" y="486" width="6" height="6" fill="#ff4848"/>
<text x="1270" y="494" font-size="12" fill="#000" text-anchor="start" >13</text>
<line x1="1196" y1="511" x2="1225" y2="511" stroke="#800000" stroke-width="2"/>
<line x1="1255" y1="511" x2="1284" y2="511" stroke="#800000" stroke-width="2"/>
<text x="1209.5" y="509" font-size="12" fill="#000" text-anchor="end" >5</text>
<rect x="1212" y="501" width="6" height="6" fill="#ff4848"/>
<text x="1270" y="509" font-size="12" fill="#000" text-anchor="start" >12</text>
<line x1="1196" y1="525" x2="1225" y2="525" stroke="#800000" stroke-width="2"/>
<line x1="1255" y1="525" x2="1284" y2="525" stroke="#800000" stroke-width="2"/>
<text x="1209.5" y="523" font-size="12" fill="#000" text-anchor="end" >6</text>
<rect x="1212" y="515" width="6" height="6" fill="#ff4848"/>
<text x="1270" y="523" font-size="12" fill="#000" text-anchor="start" >11</text>
<line x1="1196" y1="540" x2="1225" y2="540" stroke="#800000" stroke-width="2"/>
<line x1="1255" y1="540" x2="1284" y2="540" stroke="#800000" stroke-width="2"/>
<text x="1209.5" y="538" font-size="12" fill="#000" text-anchor="end" >7</text>
<rect x="1212" y="530" width="6" height="6" fill="#ff4848"/>
<text x="1270" y="538" font-size="12" fill="#000" text-anchor="start" >10</text>
<line x1="1196" y1="555" x2="1225" y2="555" stroke="#800000" stroke-width="2"/>
<line x1="1255" y1="555" x2="1284" y2="555" stroke="#800000" stroke-width="2"/>
<text x="1209.5" y="553" font-size="12" fill="#000" text-anchor="end" >8</text>
<text x="1270" y="553" font-size="12" fill="#000" text-anchor="start" >9</text>
<line x1="931" y1="452" x2="941.8" y2="442.3" stroke="#0000c8" stroke-width="1.4"/>
<polygon points="939,437.7 946.1,444.5 953.2,429.9" fill="none" stroke="#0000c8" stroke-width="1.4" stroke-linejoin="round"/>
<text x="961" y="435" font-size="12.5" fill="#0000c8" text-anchor="start" >D0</text>
<text x="961" y="449.5" font-size="12.5" fill="#000" text-anchor="start" >V=0.0875</text>
<text x="961" y="449.5" font-size="12.5" fill="#000" text-anchor="start" opacity="0.6">V=1.0</text>
<rect x="1431" y="422" width="96" height="140" fill="#400000" stroke="#800000" stroke-width="2"/>
<line x1="1519" y1="422" x2="1519" y2="408" stroke="#800000" stroke-width="2"/>
<line x1="1519" y1="408" x2="1519" y2="353" stroke="#003c00" stroke-width="2"/>
<polygon points="1512,364.5 1526,364.5 1519,350.5" fill="none" stroke="#003c00" stroke-width="2"/>
<rect x="1508" y="404" width="7" height="7" fill="#ff4848"/>
<polygon points="1455.3,441.8 1459.5,437.2 1502.3,437.2 1505.6,441.8 1500.9,447.4 1460.3,447.4" fill="#005000"/>
<polygon points="1455.3,443.2 1450.4,447.4 1448.4,484.7 1452.6,489.6 1458,484.7 1459.5,447.4" fill="#005000"/>
<polygon points="1505.6,443.2 1510.6,447.4 1509.2,484.7 1503.6,489.6 1499.5,484.7 1500.9,447.4" fill="#005000"/>
<polygon points="1452.6,491.6 1456.7,486.9 1500.9,486.9 1504.5,491.6 1500.9,497 1456.7,497" fill="#005000"/>
<polygon points="1452.6,493.5 1448.4,497 1447,535.7 1452,541.3 1457.3,535.7 1457.3,497" fill="#005000"/>
<polygon points="1504.5,493.5 1509.2,497 1507.8,534.4 1502.3,539.9 1498.1,535.7 1499.5,497" fill="#005000"/>
<polygon points="1452,541.3 1456.7,536.6 1498.1,536.6 1502.3,541.3 1498.1,546.8 1456.7,546.8" fill="#005000"/>
<polygon points="438.5,569 453.5,569 446,555.5" fill="none" stroke="#003c00" stroke-width="2"/>
<line x1="446" y1="565" x2="446" y2="599" stroke="#003c00" stroke-width="2"/>
<line x1="446" y1="599" x2="446" y2="614" stroke="#800000" stroke-width="2"/>
<rect x="440" y="614" width="12" height="44" fill="#c8c8a8" stroke="#800000" stroke-width="2"/>
<line x1="446" y1="658" x2="446" y2="672" stroke="#800000" stroke-width="2"/>
<line x1="446" y1="672" x2="446" y2="753" stroke="#003c00" stroke-width="2"/>
<rect x="435" y="595" width="7" height="7" fill="#ff4848"/>
<rect x="435" y="669" width="7" height="7" fill="#ff4848"/>
<text x="461" y="630" font-size="16.5" fill="#000" text-anchor="start" >R1</text>
<text x="461" y="646" font-size="12" fill="#000" text-anchor="start" >10k</text>
<circle cx="446" cy="717" r="3.8" fill="#003c00"/>
<polyline points="446,717 652,717" fill="none" stroke="#003c00" stroke-width="2" stroke-linejoin="miter"/>
<rect x="435" y="749" width="7" height="7" fill="#ff4848"/>
<rect x="435" y="823" width="7" height="7" fill="#4848ff"/>
<line x1="446" y1="753" x2="446" y2="768.5" stroke="#800000" stroke-width="2"/>
<circle cx="446" cy="772.5" r="4" fill="#c8c8a8" stroke="#800000" stroke-width="1.6"/>
<circle cx="446" cy="808.5" r="4" fill="#c8c8a8" stroke="#800000" stroke-width="1.6"/>
<line x1="446" y1="812.5" x2="446" y2="828" stroke="#800000" stroke-width="2"/>
<line x1="446" y1="828" x2="446" y2="878" stroke="#003c00" stroke-width="2"/>
<rect x="456.5" y="769" width="2" height="42" fill="#800000"/>
<rect x="458" y="778.5" width="6.5" height="24" fill="#c8c8a8" stroke="#800000" stroke-width="1.8"/>
<polygon points="457.5,814 463.5,814 466.5,817 466.5,823 463.5,826 457.5,826 454.5,823 454.5,817" fill="#500000" stroke="#e01010" stroke-width="1.6"/>
<rect x="430.5" y="877" width="30" height="2" fill="#003c00"/>
<rect x="437" y="884.5" width="17" height="2" fill="#003c00"/>
<rect x="442" y="892" width="8" height="2" fill="#003c00"/>
<line x1="563" y1="717" x2="574.2" y2="707" stroke="#0000c8" stroke-width="1.4"/>
<polygon points="571.4,702.4 578.5,709.2 585.6,694.6" fill="none" stroke="#0000c8" stroke-width="1.4" stroke-linejoin="round"/>
<text x="594" y="699" font-size="12.5" fill="#0000c8" text-anchor="start" >U1(P1.0)</text>
<text x="594" y="714" font-size="12.5" fill="#000" text-anchor="start" >V=4.99503</text>
<rect x="637" y="177" width="1.2" height="726" fill="#1010d0"/>
<circle cx="1372.5" cy="643.3" r="5.5" fill="none" stroke="#0000c8" stroke-width="1.5"/>
<rect x="1364" y="642.5" width="16" height="1.6" fill="#0000c8"/>
<rect x="1371.7" y="635.5" width="1.6" height="16" fill="#0000c8"/>
<path d="M1276.3,384.8 C1275.83,384.62 1274.43,383.47 1273.5,383.7 C1272.57,383.93 1271.53,385.05 1270.7,386.2 C1269.87,387.35 1269.05,389.38 1268.5,390.6 C1267.95,391.82 1267.87,391.82 1267.4,393.5 C1266.93,395.18 1266.23,398.2 1265.7,400.7 C1265.17,403.2 1264.57,406.18 1264.2,408.5 C1263.83,410.82 1264.08,412.75 1263.5,414.6 C1262.92,416.45 1261.73,417.83 1260.7,419.6 C1259.67,421.37 1257.95,422.97 1257.3,425.2 C1256.65,427.43 1256.8,429.83 1256.8,433 C1256.8,436.17 1257.4,440.85 1257.3,444.2 C1257.2,447.55 1257.13,449.93 1256.2,453.1 C1255.27,456.27 1253.18,460.03 1251.7,463.2 C1250.22,466.37 1248.33,469.3 1247.3,472.1 C1246.27,474.9 1245.88,474.25 1245.5,480 C1245.12,485.75 1244.75,498.85 1245,506.6 C1245.25,514.35 1246.45,520.3 1247,526.5 C1247.55,532.7 1247.2,537.82 1248.3,543.8 C1249.4,549.78 1251.38,556.63 1253.6,562.4 C1255.82,568.17 1258.5,573.53 1261.6,578.4 C1264.7,583.27 1268.43,588.17 1272.2,591.6 C1275.97,595.03 1280.87,598.55 1284.2,599 C1287.53,599.45 1289.32,597.3 1292.2,594.3 C1295.08,591.3 1298.4,586.32 1301.5,581 C1304.6,575.68 1307.72,569.48 1310.8,562.4 C1313.88,555.32 1317.8,544.92 1320,538.5 C1322.2,532.08 1322.67,530.77 1324,523.9 C1325.33,517.03 1327.1,504.62 1328,497.3 C1328.9,489.98 1329.1,486.43 1329.4,480 C1329.7,473.57 1329.82,464.3 1329.8,458.7 C1329.78,453.1 1329.85,449.75 1329.3,446.4 C1328.75,443.05 1328.08,441.57 1326.5,438.6 C1324.92,435.63 1322.22,431.95 1319.8,428.6 C1317.38,425.25 1314.97,421.3 1312,418.5 C1309.03,415.7 1305.17,413.85 1302,411.8 C1298.83,409.75 1296.17,407.87 1293,406.2 C1289.83,404.53 1286.33,403.37 1283,401.8 C1279.67,400.23 1275.75,398.35 1273,396.8 C1270.25,395.25 1267.58,393.22 1266.5,392.5" fill="none" stroke="#e21f1f" stroke-width="4.3" stroke-linecap="round" stroke-linejoin="round"/>
</svg>
<svg class="a" style="left:0;top:0" width="1547" height="941" viewBox="0 0 1547 941"><defs><radialGradient id="hg" cx="0.4" cy="0.35" r="0.7"><stop offset="0" stop-color="#4a7aff" stop-opacity="0.6"/><stop offset="1" stop-color="#0010e8" stop-opacity="0"/></radialGradient><linearGradient id="lblg" x1="0" y1="0" x2="0" y2="1"><stop offset="0" stop-color="#afcce2"/><stop offset="1" stop-color="#e6f0f8"/></linearGradient><linearGradient id="pk" x1="0" y1="0" x2="1" y2="1"><stop offset="0" stop-color="#555"/><stop offset="1" stop-color="#ccc"/></linearGradient></defs><rect x="142.5" y="67" width="1" height="27" fill="#98a6b2"/><rect x="143.5" y="67" width="1" height="27" fill="#f4f8fb"/>
<rect x="438.5" y="67" width="1" height="27" fill="#98a6b2"/><rect x="439.5" y="67" width="1" height="27" fill="#f4f8fb"/>
<rect x="879" y="67" width="1" height="27" fill="#98a6b2"/><rect x="880" y="67" width="1" height="27" fill="#f4f8fb"/>
<rect x="919" y="67" width="1" height="27" fill="#98a6b2"/><rect x="920" y="67" width="1" height="27" fill="#f4f8fb"/>
<rect x="1169" y="67" width="1" height="27" fill="#98a6b2"/><rect x="1170" y="67" width="1" height="27" fill="#f4f8fb"/>
<rect x="1273" y="67" width="1" height="27" fill="#98a6b2"/><rect x="1274" y="67" width="1" height="27" fill="#f4f8fb"/>
<rect x="1408.5" y="67" width="1" height="27" fill="#98a6b2"/><rect x="1409.5" y="67" width="1" height="27" fill="#f4f8fb"/>
<path d="M20.5,68.5 L30.5,68.5 L35.5,73.5 L35.5,90.5 L20.5,90.5 Z" fill="#fff" stroke="#000" stroke-width="1.3"/><path d="M30.5,68.5 L30.5,73.5 L35.5,73.5" fill="#fff" stroke="#000" stroke-width="1"/><path d="M29,90 L35,84 L35,90 Z" fill="#aaa"/>
<path d="M48,78 L52,75.5 L57,75.5 L58.5,77 L68,77 L69.5,79 L69.5,90 L49,90 Z" fill="#f2c43a" stroke="#8a6a10" stroke-width="0.8"/><path d="M47.5,81 L70.5,81 L69,90 L49,90 Z" fill="#ffd84a" stroke="#8a6a10" stroke-width="0.8"/><path d="M58,77.5 Q57,71 63.5,71" fill="none" stroke="#000" stroke-width="2"/><path d="M62,68 L66.5,71.5 L62,74.5 Z" fill="#000"/>
<rect x="79.5" y="68.5" width="23" height="23" rx="2" fill="#2f8ff0"/><rect x="82" y="70" width="18" height="9" fill="#fff"/><rect x="83" y="71.5" width="16" height="1" fill="#777"/><rect x="83" y="74" width="16" height="1" fill="#777"/><rect x="83" y="76.5" width="16" height="1" fill="#777"/><rect x="83.5" y="83" width="15" height="8" fill="#d8d8d8"/><rect x="86" y="84" width="2" height="6" fill="#1a6fd8"/><rect x="93" y="83" width="5" height="8" fill="#8a8a8a"/>
<rect x="111.5" y="68.5" width="14" height="22" fill="#b8c0c8" stroke="#c06a00" stroke-width="1.6"/><path d="M112,69 L118,72 L118,92 L112,89 Z" fill="#f0b400" stroke="#000" stroke-width="0.8"/><path d="M118.5,80 L126,73 L126,77.5 L134.5,77.5 L134.5,82.5 L126,82.5 L126,87 Z" fill="#22c022"/>
<path d="M154,79 L163,70 L171.5,79 Z" fill="#d42020" stroke="#222" stroke-width="0.8"/><rect x="168" y="69" width="3.5" height="7" fill="#d42020" stroke="#222" stroke-width="0.6"/><rect x="154.5" y="79" width="17.5" height="11.5" fill="#fff" stroke="#222" stroke-width="1"/><rect x="158" y="83.5" width="3.5" height="7" fill="#f8f000" stroke="#444" stroke-width="0.5"/><rect x="165" y="81" width="4" height="3" fill="#f8f000" stroke="#444" stroke-width="0.5"/>
<rect x="185.5" y="73.5" width="19" height="1.3" fill="#444"/><path d="M191.5,68.5 L199,74 L191.5,79.5 Z" fill="#2a8de0" stroke="#123" stroke-width="0.8"/><rect x="199" y="68.5" width="1.6" height="11" fill="#333"/><rect x="185.5" y="86" width="19" height="1.3" fill="#444"/><rect x="190.5" y="82" width="3" height="10" fill="#2a8de0" stroke="#123" stroke-width="0.6"/><rect x="196.5" y="82" width="3" height="10" fill="#2a8de0" stroke="#123" stroke-width="0.6"/>
<g fill="#e02020"><rect x="222" y="69" width="1.5" height="4"/><rect x="226" y="69" width="1.5" height="4"/><rect x="230" y="69" width="1.5" height="4"/><rect x="222" y="87" width="1.5" height="4"/><rect x="226" y="87" width="1.5" height="4"/><rect x="230" y="87" width="1.5" height="4"/><rect x="215" y="76" width="4" height="1.5"/><rect x="215" y="80" width="4" height="1.5"/><rect x="215" y="84" width="4" height="1.5"/><rect x="235" y="76" width="4" height="1.5"/><rect x="235" y="80" width="4" height="1.5"/><rect x="235" y="84" width="4" height="1.5"/></g><path d="M220.5,75 L222,73.5 L235,73.5 L235,87 L220.5,87 Z" fill="#fff" stroke="#000" stroke-width="1.2"/><rect x="223.5" y="76.5" width="8" height="8" fill="#d82020"/>
<path d="M256,70 L247,80 L256,89.5" fill="none" stroke="#222" stroke-width="0.9"/><ellipse cx="253.5" cy="80" rx="1.6" ry="2.8" fill="#1e70c8"/><path d="M258,78 L271,71 L271,89 L258,83 Z" fill="#10a040"/><rect x="260" y="77" width="7" height="2" fill="#f0f000" transform="rotate(-25 263 78)"/><path d="M262,81 L266,81 L266,86 L262,85 Z" fill="#e02020"/>
<circle cx="290.5" cy="78.5" r="9" fill="#b8e8e0" stroke="#222" stroke-width="1"/><path d="M284,79 L297,79 M290.5,72 L290.5,86 M286,75 L288,77" stroke="#6cc8b0" stroke-width="1"/><path d="M295,85 L299,91" stroke="#a05010" stroke-width="2.5"/><circle cx="299" cy="72" r="1.5" fill="none" stroke="#2a5" stroke-width="0.8"/><circle cx="299" cy="86.5" r="1.5" fill="none" stroke="#2a5" stroke-width="0.8"/><circle cx="284" cy="88.5" r="1.5" fill="none" stroke="#2a5" stroke-width="0.8"/>
<path d="M315.5,68.5 L326,68.5 L330.5,73 L330.5,91 L315.5,91 Z" fill="#108040" stroke="#333" stroke-width="0.8"/><path d="M326,68.5 L326,73 L330.5,73 Z" fill="#fff"/><rect x="321" y="74" width="5" height="11" fill="#60b090" stroke="#4ff" stroke-width="0.8"/><path d="M317,76 L321,76 M326,76 L329,76 M317,81 L321,81 M326,81 L329,81 M318,72 L318,88" stroke="#4ef0e0" stroke-width="0.8"/>
<path d="M347.5,68.5 L358,68.5 L363,73.5 L363,91 L347.5,91 Z" fill="#fff" stroke="#555" stroke-width="0.8"/><path d="M358,68.5 L358,73.5 L363,73.5" fill="#eee" stroke="#555" stroke-width="0.7"/><text x="349.5" y="88" font-size="16" font-weight="bold" fill="#8a8a00" font-family="Liberation Sans">$</text>
<rect x="375.5" y="72.5" width="22.5" height="15" fill="#8ff8f8" stroke="#666" stroke-width="1"/><rect x="376" y="81" width="21.5" height="6" fill="#dffcfc"/><text x="377" y="84.5" font-size="8" font-weight="bold" fill="#2020e0" font-family="Liberation Mono">01</text><text x="389" y="84" font-size="6" fill="#2020e0" font-family="Liberation Mono">0x</text>
<path d="M412.5,68.5 L423,68.5 L428,73.5 L428,92 L412.5,92 Z" fill="#fff" stroke="#333" stroke-width="0.8"/><g stroke="#888" stroke-width="1"><path d="M414,71 L419,71 M414,74 L420,74 M414,77 L426,77 M414,80 L426,80 M414,83 L426,83 M416,86 L426,86 M414,89 L424,89"/></g>
<circle cx="459" cy="80" r="11.8" fill="#0010e8"/><circle cx="459" cy="80" r="11.8" fill="url(#hg)"/><text x="459" y="87.5" font-size="19" font-weight="bold" fill="#fff" text-anchor="middle" font-family="Liberation Sans">?</text>
<path d="M820.5,68.5 L830,68.5 L835,73.5 L835,91 L820.5,91 Z" fill="#fff" stroke="#555" stroke-width="0.9"/><path d="M830,68.5 L830,73.5 L835,73.5" fill="#fff" stroke="#555" stroke-width="0.7"/><path d="M822,81 Q823,75 829,75.5 L828,73 L832,77 L828,79.5 L828.5,77.5 Q825,77.5 822,81 Z" fill="#1a9040"/><path d="M834,80 Q833,86 827,85.5 L828,88 L824,84 L828,81.5 L827.5,83.5 Q831,83.5 834,80 Z" fill="#1a9040"/>
<rect x="843.5" y="65.5" width="31" height="29" fill="#c9def0" stroke="#7ea4c4" stroke-width="1"/>
<circle cx="850" cy="71" r="1.6" fill="#222"/><circle cx="850" cy="80" r="1.6" fill="#222"/><circle cx="850" cy="89" r="1.6" fill="#222"/><circle cx="859" cy="71" r="1.6" fill="#222"/><circle cx="859" cy="80" r="1.6" fill="#222"/><circle cx="859" cy="89" r="1.6" fill="#222"/><circle cx="868.5" cy="71" r="1.6" fill="#222"/><circle cx="868.5" cy="80" r="1.6" fill="#222"/><circle cx="868.5" cy="89" r="1.6" fill="#222"/><path d="M850,71 L868.5,71 M850,80 L868.5,80 M850,89 L868.5,89 M850,71 L850,89 M859,71 L859,89 M868.5,71 L868.5,89" stroke="#555" stroke-width="0.8" stroke-dasharray="1.5,2"/>
<path d="M887,80 L911,80 M899.5,68 L899.5,92" stroke="#333" stroke-width="1.3"/><rect x="895" y="75.5" width="9.5" height="9" fill="#f8f000" stroke="#111" stroke-width="1"/><path d="M899.7,76 L899.7,84 M895.5,80 L904,80" stroke="#555" stroke-width="0.6"/>
<path d="M939,68 L944,73 L941,73 L941,78 L946,78 L946,75 L951,80 L946,85 L946,82 L941,82 L941,87 L944,87 L939,92 L934,87 L937,87 L937,82 L932,82 L932,85 L927,80 L932,75 L932,78 L937,78 L937,73 L934,73 Z" fill="#1a64f0" stroke="#000" stroke-width="1"/>
<path d="M976.1,84.05 L979.7,89.45" stroke="#9a4a08" stroke-width="3" stroke-linecap="round"/><circle cx="970.7" cy="77.3" r="9" fill="#a8ecf0" stroke="#222" stroke-width="1.1"/><path d="M965.5,77.3 L976,77.3 M970.7,72 L970.7,82.5" stroke="#000" stroke-width="2.6"/>
<path d="M1008.4,84.05 L1012.0,89.45" stroke="#9a4a08" stroke-width="3" stroke-linecap="round"/><circle cx="1003" cy="77.3" r="9" fill="#a8ecf0" stroke="#222" stroke-width="1.1"/><path d="M997.5,77.3 L1008.5,77.3" stroke="#000" stroke-width="2.6"/>
<path d="M1040.4,84.05 L1044.0,89.45" stroke="#9a4a08" stroke-width="3" stroke-linecap="round"/><circle cx="1035" cy="77.3" r="9" fill="#a8ecf0" stroke="#222" stroke-width="1.1"/><rect x="1030.5" y="73" width="9" height="8.5" fill="#7a7a7a" stroke="#444" stroke-width="0.6"/>
<rect x="1060.5" y="69.5" width="12.5" height="21" fill="#fff" stroke="#000" stroke-width="1" stroke-dasharray="1,1"/><path d="M1074.6799999999998,80.1 L1077.3999999999999,84.18" stroke="#9a4a08" stroke-width="3" stroke-linecap="round"/><circle cx="1070.6" cy="75" r="6.8" fill="#a8ecf0" stroke="#222" stroke-width="1.1"/>
<path d="M1106,68.5 L1106,83.5 L1117,78 L1113,77 Q1117,73 1121,76 Q1125,81 1117,91.5 Q1129,86 1128,77 Q1126,67 1116,67.5 Q1112,68 1109.5,71 Z" fill="#9a9a9a" stroke="#888" stroke-width="0.6"/>
<path d="M1160,68.5 L1160,83.5 L1149,78 L1153,77 Q1149,73 1145,76 Q1141,81 1149,91.5 Q1137,86 1138,77 Q1140,67 1150,67.5 Q1154,68 1156.5,71 Z" fill="#9a9a9a" stroke="#888" stroke-width="0.6"/>
<path d="M1183,68.5 L1193,86 M1195,68.5 L1185,86" stroke="#a0a0a0" stroke-width="1.6"/><ellipse cx="1184" cy="88.5" rx="3.2" ry="3.5" fill="none" stroke="#a0a0a0" stroke-width="1.5"/><ellipse cx="1194" cy="88.5" rx="3.2" ry="3.5" fill="none" stroke="#a0a0a0" stroke-width="1.5"/>
<path d="M1211.5,69 L1220,69 L1223,72 L1223,85 L1211.5,85 Z" fill="#fff" stroke="#000" stroke-width="1.2"/><path d="M1218.5,74.5 L1227,74.5 L1231,78.5 L1231,91 L1218.5,91 Z" fill="#fff" stroke="#000" stroke-width="1.2"/><path d="M1213,72 L1219,72 M1213,75 L1217,75 M1213,78 L1217,78 M1213,81 L1217,81 M1220,79 L1229,79 M1220,82 L1229,82 M1220,85 L1229,85 M1220,88 L1229,88" stroke="#555" stroke-width="1"/>
<rect x="1243.5" y="70.5" width="17.5" height="21" rx="1" fill="#b0b0b0" stroke="#999"/><rect x="1249" y="68.5" width="7" height="3" fill="#999"/><path d="M1248,73.5 L1257,73.5 L1261,77 L1261,90 L1248,90 Z" fill="#fff" stroke="#999"/><path d="M1250,77 L1259,77 M1250,80 L1259,80 M1250,83 L1259,83 M1250,86 L1259,86" stroke="#999" stroke-width="1"/>
<rect x="1281.5" y="68.5" width="23" height="8" fill="#9a9a9a" stroke="#777"/><rect x="1281.5" y="83.5" width="23" height="8" fill="#9a9a9a" stroke="#777"/><path d="M1290,72 L1296,72 L1296,79 L1299,79 L1293,85 L1287,79 L1290,79 Z" fill="#888"/>
<rect x="1313.5" y="68.5" width="23" height="8" fill="none" stroke="#888"/><rect x="1313.5" y="83.5" width="23" height="8" fill="#9a9a9a" stroke="#777"/><path d="M1322,72 L1328,72 L1328,79 L1331,79 L1325,85 L1319,79 L1322,79 Z" fill="#888"/>
<rect x="1345" y="68.5" width="23.5" height="23.5" fill="#9a9a9a" stroke="#777"/><path d="M1350,82 A7,7 0 1 1 1358,87" fill="none" stroke="#8a8a8a" stroke-width="2.5"/>
<rect x="1377" y="68.5" width="23.5" height="23.5" fill="#9a9a9a" stroke="#777"/><path d="M1380,71 L1398,89.5 M1398,71 L1380,89.5" stroke="#8a8a8a" stroke-width="2.5"/>
<path d="M1432,84 L1436,90" stroke="#777" stroke-width="2.6" stroke-linecap="round"/><circle cx="1428.4" cy="77.3" r="9" fill="#e0e0e0" stroke="#777" stroke-width="1"/><path d="M1423,71 L1433,77.3 L1423,83.5 Z M1433,77.3 L1440,77.3 M1419.5,74 L1423,74 M1419.5,80.5 L1423,80.5" fill="none" stroke="#888" stroke-width="1"/>
<path d="M1455,74 L1468,81 L1455,89 Z" fill="#ddd" stroke="#999"/><path d="M1449,77 L1455,77 M1449,86 L1455,86 M1467,81 L1472,81" stroke="#999" stroke-width="1.3"/><path d="M1466.5,68 L1466.5,78 M1461.5,73 L1471.5,73" stroke="#aaa" stroke-width="2.4"/>
<rect x="1482.5" y="69.5" width="21.5" height="21.5" fill="#888"/><rect x="1482.5" y="69.5" width="21.5" height="21.5" fill="url(#pk)"/><path d="M1484,89 L1500,73" stroke="#ccc" stroke-width="3.5" stroke-linecap="round"/><path d="M1484,89 L1500,73" stroke="#777" stroke-width="1"/><circle cx="1500.5" cy="72.5" r="3.5" fill="none" stroke="#bbb" stroke-width="1.6"/>
<path d="M1515.5,90 L1527.5,77.5" stroke="#333" stroke-width="4.6" stroke-linecap="round"/><path d="M1515.5,90 L1527.5,77.5" stroke="#8a8a8a" stroke-width="2.6" stroke-linecap="round"/><path d="M1521,74.5 Q1525,68 1532,69 Q1536,71 1537,76 L1534.5,78 Q1532,74 1529,75 L1529,80 L1524,78.5 Z" fill="#7a7a7a" stroke="#444" stroke-width="0.8"/>
<rect x="46.5" y="104" width="1" height="26" fill="#98a6b2"/><rect x="47.5" y="104" width="1" height="26" fill="#f4f8fb"/>
<rect x="118.5" y="104" width="1" height="26" fill="#98a6b2"/><rect x="119.5" y="104" width="1" height="26" fill="#f4f8fb"/>
<rect x="222.5" y="104" width="1" height="26" fill="#98a6b2"/><rect x="223.5" y="104" width="1" height="26" fill="#f4f8fb"/>
<path d="M22,108 L35,108 L35,112 L25,112 L25,117 L35,117 L35,122 L29,122 M22,108" fill="none" stroke="#e02020" stroke-width="1.2"/><path d="M27,111 L31,111 L31,116 L20,116 L20,126 L30,126" fill="none" stroke="#2020e0" stroke-width="1.2"/><rect x="17.5" y="106" width="7.5" height="5" fill="#2ec82e" stroke="#222" stroke-width="0.7"/><rect x="28.5" y="122.5" width="8" height="5" fill="#2ec82e" stroke="#222" stroke-width="0.7"/>
<path d="M56.5,123 L59.5,109 L65,108 L65.5,126.5 L56,126.5 Z M68,108 L73.5,109 L76.5,123 L77,126.5 L67.5,126.5 Z" fill="#1a5ae8"/><rect x="59" y="106.5" width="5" height="3" fill="#0a3ab8"/><rect x="69" y="106.5" width="5" height="3" fill="#0a3ab8"/><rect x="64.5" y="113" width="4" height="6" fill="#3070e0"/><rect x="55.5" y="124" width="10" height="2.5" fill="#0a3ab8"/><rect x="67.5" y="124" width="10" height="2.5" fill="#0a3ab8"/>
<path d="M91,125.5 L106,110" stroke="#aaa" stroke-width="3.5" stroke-linecap="round"/><circle cx="106.5" cy="109.5" r="3.5" fill="none" stroke="#aaa" stroke-width="2"/><path d="M89,108 L99,108 M89,111.5 L97,111.5" stroke="#aaa" stroke-width="1.8"/><text x="101" y="127.5" font-size="10" font-weight="bold" fill="#999" font-family="Liberation Sans">A</text>
<path d="M131.5,105.5 L142,105.5 L146.5,110 L146.5,128.5 L131.5,128.5 Z" fill="#fff" stroke="#aaa" stroke-width="0.9"/><path d="M139,112 L139,125 M133,118.5 L145,118.5" stroke="#aaa" stroke-width="2.2"/>
<path d="M162,105.5 L176,105.5 L180,110 L180,128.5 L162,128.5 Z" fill="#fff" stroke="#aaa" stroke-width="0.9"/><path d="M160,106 L182,128 M182,106 L160,128" stroke="#999" stroke-width="1.6"/>
<rect x="196" y="107.5" width="13" height="5" fill="#ddd" stroke="#999"/><rect x="193.5" y="120.5" width="6" height="6" fill="#ddd" stroke="#999"/><rect x="206" y="120.5" width="7" height="6" fill="#ddd" stroke="#999"/><path d="M200,112.5 L197,120.5 M209,112 Q213,114 210,120" fill="none" stroke="#888" stroke-width="0.9"/>
<path d="M235,105.5 L246,105.5 L251,110.5 L251,128.5 L235,128.5 Z" fill="#fff" stroke="#333" stroke-width="0.9"/><path d="M246,110 L239.5,118 L243,118 L237.5,126 L246.5,116.5 L243,116.5 L248,110 Z" fill="#1a2af0"/>
<path d="M11,190 L11,208 L15,204.5 L18.5,213 L21.5,211.5 L18,203.5 L23.5,203 Z" fill="#000"/>
<path d="M7,229.5 L15,229.5 M7,237.5 L15,237.5 M24,233.5 L30.5,233.5" stroke="#000" stroke-width="1.3"/><path d="M14.5,221 L25,233.5 L14.5,242.5 Z" fill="#ffc832" stroke="#000" stroke-width="1.1"/>
<path d="M6.5,262 L29.5,262 M18,250.5 L18,273.5" stroke="#333" stroke-width="1.6"/><rect x="14" y="258" width="8" height="8" fill="#1a6ae8"/>
<rect x="2.5" y="277.5" width="31" height="29" fill="url(#lblg)" stroke="#7aa4c4" stroke-width="1"/><rect x="6.5" y="284.5" width="23" height="14" rx="1.5" fill="none" stroke="#000" stroke-width="1.1" stroke-dasharray="2.4,1.6"/><text x="18" y="296" font-size="11.5" fill="#1010e0" text-anchor="middle" font-family="Liberation Sans" transform="translate(18 296) scale(0.9 1.1) translate(-18 -296)">LBL</text>
<rect x="9" y="311.85" width="4" height="1.3" rx="0.5" fill="#000"/><rect x="15" y="311.85" width="5" height="1.3" rx="0.5" fill="#000"/><rect x="22" y="311.85" width="6" height="1.3" rx="0.5" fill="#000"/><rect x="9" y="314.85" width="19" height="1.3" rx="0.5" fill="#000"/><rect x="9" y="318.85" width="11" height="1.3" rx="0.5" fill="#000"/><rect x="21" y="318.85" width="7" height="1.3" rx="0.5" fill="#000"/><rect x="9" y="320.85" width="5" height="1.3" rx="0.5" fill="#000"/><rect x="15" y="320.85" width="13" height="1.3" rx="0.5" fill="#000"/><rect x="9" y="322.85" width="19" height="1.3" rx="0.5" fill="#000"/><rect x="13" y="324.85" width="5" height="1.3" rx="0.5" fill="#000"/><rect x="20" y="324.85" width="8" height="1.3" rx="0.5" fill="#000"/><rect x="9" y="326.05" width="3" height="1.3" rx="0.5" fill="#000"/><rect x="9" y="328.85" width="6" height="1.3" rx="0.5" fill="#000"/><rect x="16" y="328.85" width="12" height="1.3" rx="0.5" fill="#000"/><rect x="9" y="330.85" width="14" height="1.3" rx="0.5" fill="#000"/><rect x="24" y="330.85" width="4" height="1.3" rx="0.5" fill="#000"/>
<rect x="6" y="347.5" width="23" height="7" fill="#0a4ee0"/><path d="M10.5,341 L10.5,348 M19.5,341 L19.5,348 M15.5,354 L15.5,360.5 M24.5,354 L24.5,360.5" stroke="#0a4ee0" stroke-width="2"/>
<path d="M9,374.5 L26,374.5 L26,378 L29.5,378 L29.5,381.5 L26,381.5 L26,385 L29.5,385 L29.5,388.5 L26,388.5 L26,392.5 L9,392.5 L9,388.5 L5.5,388.5 L5.5,385 L9,385 L9,381.5 L5.5,381.5 L5.5,378 L9,378 Z" fill="#ffc832" stroke="#000" stroke-width="1.1"/>
<rect x="4" y="398.5" width="32" height="1" fill="#a8a8a8"/><rect x="4" y="612" width="32" height="1" fill="#a8a8a8"/>
<path d="M7.5,406.5 L25,406.5 L28,410.5 L25,414.5 L7.5,414.5 Z" fill="#ffc832" stroke="#000" stroke-width="1.1"/><path d="M11,418.5 L28.5,418.5 L28.5,426.5 L11,426.5 L7.5,422.5 Z" fill="#ffc832" stroke="#000" stroke-width="1.1"/>
<path d="M14.5,438.5 L24,446.5 L14.5,454.5 Z" fill="none" stroke="#20c020" stroke-width="1.3"/><path d="M6,442 L12,442 M6,451 L12,451 M24,446.5 L30,446.5" stroke="#000" stroke-width="1.1"/>
<path d="M7.5,466 L7.5,485.5 L27.5,485.5" fill="none" stroke="#000" stroke-width="1"/><path d="M10,469 Q13,462 16,473 Q19,480 22,471 Q25,466 27,474" fill="none" stroke="#e02020" stroke-width="1.2"/><path d="M10,479 Q13,473 16,480 Q19,485 22,478 Q25,474 27,480" fill="none" stroke="#2020e0" stroke-width="1.2"/>
<rect x="6.5" y="495.5" width="23" height="22" fill="#fff" stroke="#333" stroke-width="1"/><rect x="6.5" y="495.5" width="23" height="5.5" fill="#0000e0"/><circle cx="9.5" cy="498.2" r="1.2" fill="#fff"/><circle cx="12.8" cy="498.2" r="1.2" fill="#fff"/><circle cx="16.1" cy="498.2" r="1.2" fill="#fff"/>
<circle cx="18" cy="535" r="10.3" fill="#c8c8c8" stroke="#999" stroke-width="1"/><path d="M10,537 Q13,526 17,534 Q21,543 26,532" fill="none" stroke="#1010e0" stroke-width="2.4"/>
<path d="M7,575 L11,571" stroke="#555" stroke-width="1.3"/><path d="M10,569 L21,559 L24.5,562.5 L13.5,572.5 Z" fill="#f0c030" stroke="#333" stroke-width="1"/><path d="M23,560 Q27,553 29,560 Q30,567 27,571 Q26,573 28,575" fill="none" stroke="#333" stroke-width="1"/>
<path d="M7,585.5 L28,585.5 L28,592 Q17.5,586 7,592 Z" fill="#fff" stroke="#333" stroke-width="1"/><path d="M8,592.5 Q17.5,582 27,592.5" fill="none" stroke="#1a1ae0" stroke-width="1.3"/><path d="M15,593.5 L21,586" stroke="#e02020" stroke-width="1.3"/><rect x="10.5" y="595" width="16" height="11" fill="#555"/><rect x="12" y="597" width="5" height="7" fill="#333" stroke="#777" stroke-width="0.5"/><rect x="20" y="597" width="4" height="4" fill="#f0f000"/>
<path d="M8,639 L28,620.5" stroke="#000" stroke-width="2.4" stroke-linecap="round"/>
<rect x="8" y="650.5" width="19.5" height="19" fill="#2ebfa8" stroke="#1a4a44" stroke-width="1"/>
<circle cx="17.6" cy="689.6" r="10.5" fill="#2ebfa8" stroke="#1a4a44" stroke-width="1"/>
<path d="M7.5,709 L7.5,728.5 L29,728.5" fill="none" stroke="#3030e0" stroke-width="1" stroke-dasharray="1,1"/><path d="M7.5,709 Q28,709 29,728.5" fill="none" stroke="#111" stroke-width="1.3"/>
<path d="M13,740 Q19,739 20,744 Q25,741 28.5,746 Q30,752 26,754 Q22,757 19,753 Q15,759 9,756 Q5,752 6,747 Q7,741 13,740 Z" fill="#2ebfa8" stroke="#1a4a44" stroke-width="1"/>
<text x="18" y="789.5" font-size="27" fill="#000" stroke="#000" stroke-width="0.5" text-anchor="middle" font-family="Liberation Serif">A</text>
<rect x="8" y="800" width="19.5" height="19.5" fill="#2ebfa8" stroke="#111" stroke-width="1.2"/><text x="0" y="0" font-size="16" font-weight="bold" fill="#000" text-anchor="middle" font-family="Liberation Sans" transform="translate(17.8 815.6) scale(1.45 0.82)">S</text>
<path d="M6,839.6 L30,839.6 M18.4,828 L18.4,852" stroke="#000" stroke-width="1.6"/><rect x="14" y="835.5" width="8.5" height="8.5" fill="#2ebfa8" stroke="#000" stroke-width="1"/><path d="M18.4,835.5 L18.4,844 M14,839.6 L22.5,839.6" stroke="#000" stroke-width="0.8"/>
<path d="M64,201 A9,9 0 1 1 60,195" fill="none" stroke="#2a8ae0" stroke-width="3.5"/><path d="M59,191 L68,193 L62,199.5 Z" fill="#2a8ae0"/>
<path d="M50,229 A9,9 0 1 1 54,240" fill="none" stroke="#2a8ae0" stroke-width="3.5"/><path d="M46,224 L55,222.5 L53.5,231 Z" fill="#2a8ae0"/>
<rect x="43" y="249" width="33" height="18" fill="#fff"/><text x="44.5" y="263" font-size="13" fill="#000" font-family="Liberation Sans">0°</text>
<rect x="44" y="272" width="32" height="1" fill="#a8a8a8"/>
<path d="M45.5,290.3 L52,284 L52,288 L63.5,288 L63.5,284 L70,290.3 L63.5,296.6 L63.5,292.6 L52,292.6 L52,296.6 Z" fill="#2a8ae0"/>
<path d="M57.9,308 L64,314.5 L60,314.5 L60,326 L64,326 L57.9,332.3 L51.8,326 L55.8,326 L55.8,314.5 L51.8,314.5 Z" fill="#2a8ae0"/>
<path d="M11,11 L26,27 M26,11 L11,27" stroke="#ccc" stroke-width="0.6"/><circle cx="11" cy="11" r="0.9" fill="#f0a040"/><circle cx="26" cy="11" r="0.9" fill="#f0a040"/><circle cx="11" cy="27" r="0.9" fill="#f0a040"/><circle cx="26" cy="27" r="0.9" fill="#f0a040"/><circle cx="18.7" cy="19" r="5.3" fill="#2a3a6a"/><circle cx="17.5" cy="17.8" r="3" fill="#8aa0c8"/>
<g transform="translate(26 0)"><rect x="0" y="148.5" width="16" height="1.3" fill="#333"/><path d="M4.5,144 L11.5,149 L4.5,154 Z" fill="#2a8de0" stroke="#123" stroke-width="0.7"/><rect x="11.5" y="144" width="1.5" height="10" fill="#333"/><rect x="0" y="160" width="16" height="1.3" fill="#333"/><rect x="4.5" y="156" width="2.8" height="9" fill="#2a8de0" stroke="#123" stroke-width="0.5"/><rect x="9" y="156" width="2.8" height="9" fill="#2a8de0" stroke="#123" stroke-width="0.5"/></g>
<g transform="translate(2 0)"><g fill="#e02020"><rect x="188" y="145" width="1.2" height="3"/><rect x="191" y="145" width="1.2" height="3"/><rect x="194" y="145" width="1.2" height="3"/><rect x="188" y="160" width="1.2" height="3"/><rect x="191" y="160" width="1.2" height="3"/><rect x="194" y="160" width="1.2" height="3"/><rect x="182" y="150" width="3" height="1.2"/><rect x="182" y="153" width="3" height="1.2"/><rect x="182" y="156" width="3" height="1.2"/><rect x="198" y="150" width="3" height="1.2"/><rect x="198" y="153" width="3" height="1.2"/><rect x="198" y="156" width="3" height="1.2"/></g><path d="M185.5,150 L187,148.5 L197.5,148.5 L197.5,159.5 L185.5,159.5 Z" fill="#fff" stroke="#000" stroke-width="1"/><rect x="188.5" y="151" width="6.5" height="6.5" fill="#d82020"/></g>
<rect x="321.5" y="148.5" width="18" height="11" fill="#8ff8f8" stroke="#666" stroke-width="0.8"/><text x="322.5" y="156.5" font-size="6.5" font-weight="bold" fill="#2020e0" font-family="Liberation Mono">01</text><text x="331" y="156" font-size="5" fill="#2020e0" font-family="Liberation Mono">0x</text>
<path d="M21,911 L44.5,923 L21,935 Z" fill="#9a9a9a"/>
<rect x="65" y="911" width="4" height="24" fill="#8a8a8a"/><path d="M72,911 L89,923 L72,935 Z" fill="#8a8a8a"/>
<rect x="113" y="911" width="5.5" height="24" fill="#8a8a8a"/><rect x="123.5" y="911" width="5.5" height="24" fill="#8a8a8a"/>
<rect x="153" y="911" width="24" height="24" fill="#8a8a8a"/>
<path d="M214,912.5 L225,932 L203,932 Z" fill="#f39a10" stroke="#d07000" stroke-width="0.8" stroke-linejoin="round"/><rect x="213" y="917.5" width="2.2" height="8" fill="#000"/><circle cx="214.1" cy="928.5" r="1.3" fill="#000"/>
<rect x="88.5" y="184.5" width="100" height="84" fill="none" stroke="#1818c8" stroke-width="1"/><path d="M80,188.5 L150.5,188.5 L150.5,247.5 L80,247.5" fill="none" stroke="#18c018" stroke-width="1"/>
<path d="M79,204.6 L89.2,204.6 L89.2,215 L79,215" fill="none" stroke="#000" stroke-width="1"/><rect x="80" y="207.5" width="2.5" height="3" fill="#000"/><path d="M79,231.8 L89.5,231.8" stroke="#000" stroke-width="1.2"/><rect x="91.7" y="209.8" width="13.8" height="32.3" fill="none" stroke="#000" stroke-width="1"/>
<rect x="107.2" y="210.5" width="7" height="7" fill="#000"/><path d="M107.2,209.5 L115,209.5 M107.2,218.8 L111,218.8 M112.7,208.5 L112.7,220 L118.3,220 L118.3,208.5" fill="none" stroke="#000" stroke-width="1"/><rect x="118.5" y="211.5" width="8.5" height="6" fill="#000"/><path d="M118.5,210 L127,210 M118.5,219 L127,219" stroke="#000" stroke-width="0.9"/><rect x="128.5" y="209.5" width="2.5" height="11" fill="none" stroke="#000" stroke-width="0.9"/><rect x="133" y="211.5" width="8.5" height="6" fill="#000"/><path d="M133,210 L141.5,210 M133,219 L141.5,219" stroke="#000" stroke-width="0.9"/><rect x="142" y="208" width="7" height="12" fill="#000"/><rect x="145.3" y="211.3" width="2" height="2" fill="#fff"/><rect x="145.3" y="215.5" width="2" height="2" fill="#fff"/><path d="M148.4,202 L148.4,207 M162.3,203 L162.3,207.5" stroke="#000" stroke-width="1"/></svg>
</body></html>
